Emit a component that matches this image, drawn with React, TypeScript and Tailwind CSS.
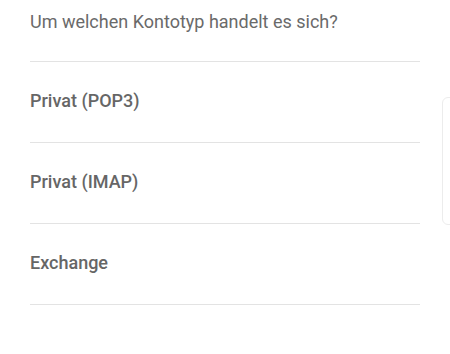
const options = ["Privat (POP3)", "Privat (IMAP)", "Exchange"];

export default function App() {
  return (
    <div
      className="relative h-[354px] w-[450px] overflow-hidden bg-white"
      style={{ fontFamily: "Roboto, 'Liberation Sans', sans-serif" }}
    >
      <div className="mx-[30px]">
        <div className="h-[62px] border-b border-[#e3e3e3] pt-[10px] text-[18px] leading-6 text-[#6a6a6a]">
          Um welchen Kontotyp handelt es sich?
        </div>
        {options.map((o) => (
          <div
            key={o}
            className="flex h-[81px] items-center border-b border-[#e3e3e3] pb-[4px] text-[18px] font-medium text-[#666666]"
          >
            {o}
          </div>
        ))}
      </div>
      <div className="absolute left-[442px] top-[97px] h-[128px] w-[20px] rounded-[6px] border border-[#ececec]" />
    </div>
  );
}
